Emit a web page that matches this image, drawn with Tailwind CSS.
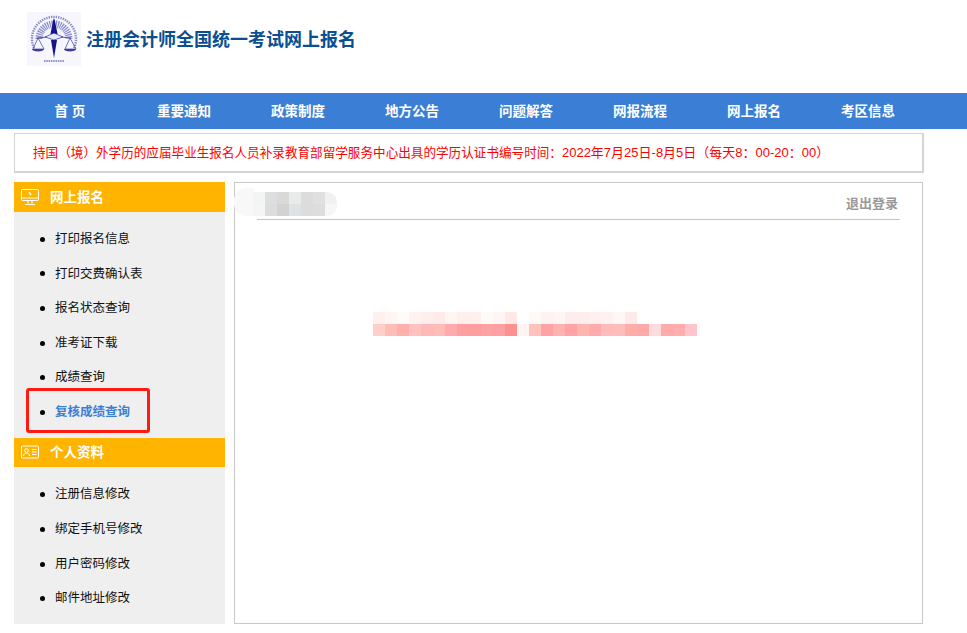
<!DOCTYPE html>
<html lang="zh-CN">
<head>
    <meta charset="UTF-8">
    <meta name="viewport" content="width=device-width, initial-scale=1.0">
    <title>注册会计师全国统一考试网上报名</title>
    <script src="https://cdn.jsdelivr.net/npm/@tailwindcss/browser@4"></script>
</head>
<body class="bg-white font-['Liberation_Sans','Noto_Sans_CJK_SC',sans-serif] h-[633px] overflow-hidden">
    <!-- 页头 -->
    <header class="h-[93px] pl-[27px] pt-[12px] flex items-start">
        <div class="w-[54px] h-[54px] bg-[#f6f6fc]">
            <svg class="w-[54px] h-[54px] blur-[0.4px]" viewBox="0 0 54 54" fill="none">
                <path d="M7 36a22 22 0 1 1 40 0" stroke="#8c8cc8" stroke-width="2.4" stroke-dasharray="1.4 1"/>
                <path d="M12 27a15 15 0 0 1 30 0" stroke="#8a8ad0" stroke-width="7" stroke-dasharray="1.2 0.9"/>
                <path d="M26 9l1-3 1 3 2.5 13h-7z" fill="#14148c"/>
                <path d="M18 25l9-4 9 4-9 3z" fill="#e8e8f8" stroke="#14148c" stroke-width="0.6"/>
                <path d="M24 28h6l-3 18z" fill="#14148c"/>
                <path d="M10 26l10-1M44 26l-10-1" stroke="#5050a8" stroke-width="1"/>
                <path d="M11 26l-5 11h11zM43 26l-5 11h11z" stroke="#3c3ca0" stroke-width="0.7"/>
                <path d="M5 37a6 2.5 0 0 0 12 0zM37 37a6 2.5 0 0 0 12 0z" fill="#3c3ca0"/>
                <path d="M17 49h20" stroke="#7070b8" stroke-width="1.6" stroke-dasharray="1.5 0.8"/>
            </svg>
        </div>
        <h1 class="ml-[5px] mt-[15px] text-[18px] leading-[26px] font-bold text-[#0a4f92] whitespace-nowrap">注册会计师全国统一考试网上报名</h1>
    </header>

    <!-- 导航 -->
    <nav class="h-[36px] bg-[#3a7fd5] pl-[13px] pt-[2px] flex items-center text-[13.5px] font-bold text-white">
        <a class="w-[114px] text-center">首 页</a>
        <a class="w-[114px] text-center">重要通知</a>
        <a class="w-[114px] text-center">政策制度</a>
        <a class="w-[114px] text-center">地方公告</a>
        <a class="w-[114px] text-center">问题解答</a>
        <a class="w-[114px] text-center">网报流程</a>
        <a class="w-[114px] text-center">网上报名</a>
        <a class="w-[114px] text-center">考区信息</a>
    </nav>

    <!-- 通知 -->
    <div class="ml-[14px] mt-[4px] w-[910px] h-[40px] border border-[#d4d4d4] border-r-2 border-b-2 pl-[18px] pt-[1px] flex items-center text-[12.6px] text-[#ff0000] whitespace-nowrap"><span>持国（境）外学历的应届毕业生报名人员补录教育部留学服务中心出具的学历认证书编号时间：<span class="text-[13px]">2022年7月25日-8月5日（每天8：00-20：00）</span></span></div>

    <div class="ml-[14px] mt-[9px] w-[909px] h-[442px] flex gap-[9px]">
        <!-- 侧边栏 -->
        <aside class="w-[211px] bg-[#efefef] text-[12.5px] text-[#111]">
            <div class="h-[30px] bg-[#ffb400] flex items-center pl-[7px] text-white font-bold text-[13.5px]">
                <svg class="w-[18px] h-[18px] mr-[11px]" viewBox="0 0 18 18" fill="none" stroke="#fff" stroke-width="1">
                    <rect x="0.5" y="1.5" width="17" height="11" rx="1"/>
                    <path d="M0.5 10h17M7 12.5v3M11 12.5v3M4 16.5h10"/>
                    <path d="M8 4l2 3" stroke-width="1.5"/>
                </svg>
                <span class="mt-[3px]">网上报名</span>
            </div>
            <ul class="pt-[10px] pb-[8px]">
                <li class="h-[34.6px] flex items-center pl-[26px]"><span class="w-[5px] h-[5px] rounded-full bg-black mr-[10px]"></span>打印报名信息</li>
                <li class="h-[34.6px] flex items-center pl-[26px]"><span class="w-[5px] h-[5px] rounded-full bg-black mr-[10px]"></span>打印交费确认表</li>
                <li class="h-[34.6px] flex items-center pl-[26px]"><span class="w-[5px] h-[5px] rounded-full bg-black mr-[10px]"></span>报名状态查询</li>
                <li class="h-[34.6px] flex items-center pl-[26px]"><span class="w-[5px] h-[5px] rounded-full bg-black mr-[10px]"></span>准考证下载</li>
                <li class="h-[34.6px] flex items-center pl-[26px]"><span class="w-[5px] h-[5px] rounded-full bg-black mr-[10px]"></span>成绩查询</li>
                <li class="relative h-[34.6px] flex items-center pl-[26px] font-bold text-[#3b7fd4]">
                    <span class="w-[5px] h-[5px] rounded-full bg-black mr-[10px]"></span>复核成绩查询
                    <span class="absolute left-[12px] top-[-7px] w-[124px] h-[45px] border-[3px] border-[#ff1a12] rounded-[3px]"></span>
                </li>
            </ul>
            <div class="h-[29px] bg-[#ffb400] flex items-center pl-[7px] text-white font-bold text-[13.5px]">
                <svg class="w-[18px] h-[18px] mr-[11px]" viewBox="0 0 18 18" fill="none" stroke="#fff" stroke-width="1">
                    <rect x="0.5" y="3" width="17" height="12" rx="1"/>
                    <circle cx="5.5" cy="7.5" r="1.8"/>
                    <path d="M2.5 13c0-4 6-4 6 0M11 6.5h4.5M11 9h4.5M11 11.5h4.5"/>
                </svg>
                <span class="mt-[3px]">个人资料</span>
            </div>
            <ul class="pt-[11px]">
                <li class="h-[34.6px] flex items-center pl-[26px]"><span class="w-[5px] h-[5px] rounded-full bg-black mr-[10px]"></span>注册信息修改</li>
                <li class="h-[34.6px] flex items-center pl-[26px]"><span class="w-[5px] h-[5px] rounded-full bg-black mr-[10px]"></span>绑定手机号修改</li>
                <li class="h-[34.6px] flex items-center pl-[26px]"><span class="w-[5px] h-[5px] rounded-full bg-black mr-[10px]"></span>用户密码修改</li>
                <li class="h-[34.6px] flex items-center pl-[26px]"><span class="w-[5px] h-[5px] rounded-full bg-black mr-[10px]"></span>邮件地址修改</li>
            </ul>
        </aside>

        <!-- 主内容 -->
        <main class="relative flex-1 border border-[#c8c8c8]">
            <div class="absolute left-[-1px] top-[5px] w-[20px] h-[28px] rounded-l-[12px] bg-[#f8f8f8]"></div>
            <div class="ml-[22px] mr-[22px] h-[37px] border-b border-[#c4c4c4] flex justify-end items-center pt-[6px] pr-[2px] text-[13px] font-bold text-[#999]">退出登录</div>
            <div id="nameBlur" class="absolute left-[18px] top-[9px] grid grid-cols-[repeat(7,12px)] grid-rows-[repeat(2,12px)] rounded-r-[10px] overflow-hidden"></div>
            <div id="msgBlur" class="absolute left-[138px] top-[129px] grid grid-cols-[repeat(27,12px)] grid-rows-[repeat(2,12px)]"></div>
        </main>
    </div>

    <script>
        // 打码区域的色块
        const nameCells = ['#f3f4f4','#dddee0','#d8d9d8','#e9ebeb','#dcdcdc','#e0e0de','#f0f1f3','#f4f5f4','#dcdcde','#d2d2d0','#dee2e5','#dcdcdc','#dddde0','#f6f6f7'];
        const msgCells = ['#fff0ee','#fff5f3','#fffbf9','#fff3ef','#ffefec','#ffecea','#fff5f3','#fff0ee','#fff0ee','#fffafa','#fff5f5','#ffe9e7','#ffffff','#fffaf8','#fff2f2','#fff5f5','#ffeded','#ffeded','#ffefef','#fff0f2','#fff6f6','#ffeaea','#ffffff','#ffffff','#ffffff','#ffffff','#ffffff',
            '#ffcfca','#ffbdb9','#ffb0ac','#ffc2be','#ffb9b6','#ffbcb9','#ffaaad','#ff9fa0','#ff9d9f','#ffa2a4','#ffa1a2','#ff9090','#fff3f3','#ffc2ba','#ffa2a8','#ffb2af','#ffa3a8','#ffb5af','#ffabab','#ffbabb','#ffbcbc','#ffadab','#ffa9ab','#ffdcdc','#ffabab','#ffadad','#ffc4cc'];

        function fillCells(id, colors) {
            const box = document.getElementById(id);
            colors.forEach(color => {
                const cell = document.createElement('div');
                cell.style.background = color;
                box.appendChild(cell);
            });
        }

        fillCells('nameBlur', nameCells);
        fillCells('msgBlur', msgCells);
    </script>
</body>
</html>
